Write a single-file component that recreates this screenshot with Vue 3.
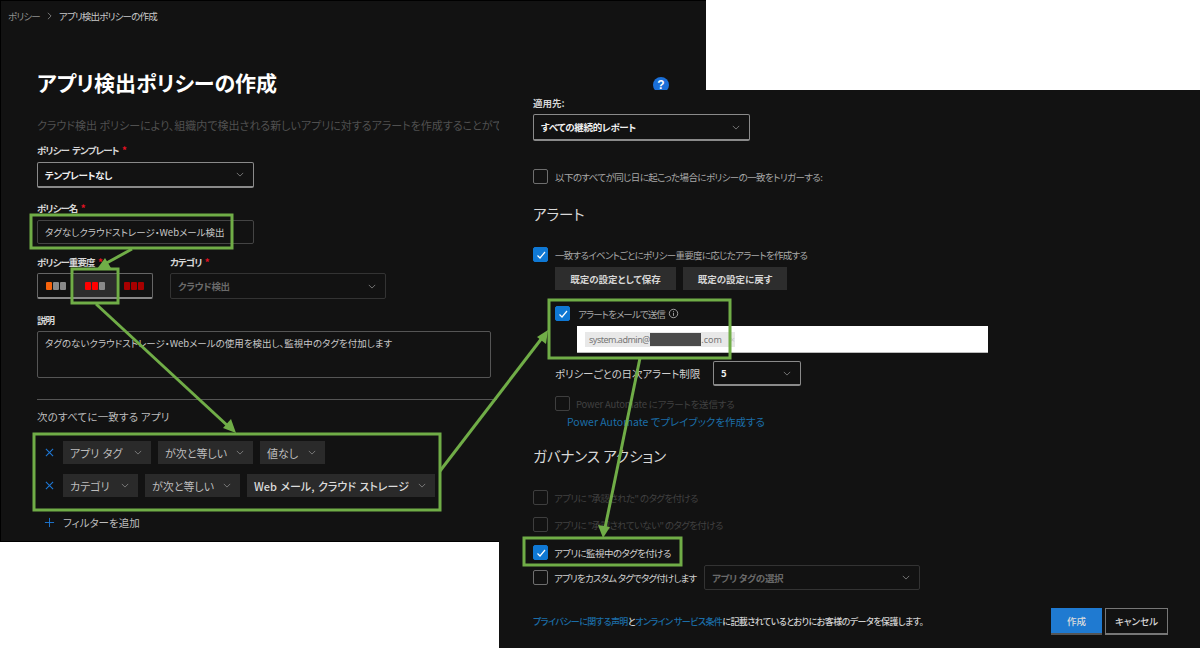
<template>
  <div class="page">
    <!-- left window -->
    <section class="win win-left">
      <div class="crumbs">
        <span>ポリシー</span>
        <svg class="crumb-sep" viewBox="0 0 6 10"><path d="M1 1l4 4-4 4" /></svg>
        <span class="crumb-now">アプリ検出ポリシーの作成</span>
      </div>
      <div class="title-row">
        <h1>アプリ検出ポリシーの作成</h1>
        <span class="help">?</span>
      </div>
      <p class="intro">クラウド検出 ポリシーにより、組織内で検出される新しいアプリに対するアラートを作成することができます。</p>

      <label class="lbl lbl-template">ポリシー テンプレート <i>*</i></label>
      <div class="select strong sel-template">
        <span>テンプレートなし</span>
        <svg class="chev" viewBox="0 0 10 6"><path d="M1 1l4 4 4-4" /></svg>
      </div>

      <label class="lbl lbl-name">ポリシー名 <i>*</i></label>
      <div class="input name-input">タグなしクラウドストレージ・Webメール検出</div>

      <div class="sev-row">
        <div>
          <label class="lbl">ポリシー重要度 <i>*</i></label>
          <div class="sev-group">
            <div v-for="(s, i) in severities" :key="i" class="sev" :class="{ active: i === 1 }">
              <span v-for="(c, j) in s" :key="j" class="bar" :class="c"></span>
            </div>
          </div>
        </div>
        <div class="cat-col">
          <label class="lbl">カテゴリ <i>*</i></label>
          <div class="select disabled sel-cat">
            <span>クラウド検出</span>
            <svg class="chev" viewBox="0 0 10 6"><path d="M1 1l4 4 4-4" /></svg>
          </div>
        </div>
      </div>

      <label class="lbl lbl-desc">説明</label>
      <div class="input textarea">タグのないクラウドストレージ・Webメールの使用を検出し、監視中のタグを付加します</div>

      <div class="divider"></div>
      <div class="match-title">次のすべてに一致する アプリ</div>

      <div v-for="(row, i) in filters" :key="i" class="filter-row">
        <svg class="x" viewBox="0 0 10 10"><path d="M1 1l8 8M9 1l-8 8" /></svg>
        <div v-for="chip in row" :key="chip.t" class="chip" :style="{ width: chip.w + 'px' }">
          <span :class="{ em: chip.em }">{{ chip.t }}</span>
          <svg class="chev" viewBox="0 0 10 6"><path d="M1 1l4 4 4-4" /></svg>
        </div>
      </div>

      <div class="add-filter">
        <svg class="plus" viewBox="0 0 12 12"><path d="M6 1v10M1 6h10" /></svg>
        <span>フィルターを追加</span>
      </div>
    </section>

    <!-- right window -->
    <section class="win win-right">
      <label class="lbl lbl-apply">適用先:</label>
      <div class="select strong sel-apply">
        <span>すべての継続的レポート</span>
        <svg class="chev" viewBox="0 0 10 6"><path d="M1 1l4 4 4-4" /></svg>
      </div>

      <div class="check trigger">
        <span class="cb"></span>
        <span class="txt">以下のすべてが同じ日に起こった場合にポリシーの一致をトリガーする:</span>
      </div>

      <h2 class="h-alert">アラート</h2>

      <div class="check alert-check">
        <span class="cb on"><svg viewBox="0 0 12 12"><path d="M2.5 6.5l2.5 2.5 5-6" /></svg></span>
        <span class="txt">一致するイベントごとにポリシー重要度に応じたアラートを作成する</span>
      </div>
      <div class="btn-row">
        <button class="btn btn-save">既定の設定として保存</button>
        <button class="btn btn-reset">既定の設定に戻す</button>
      </div>

      <div class="check mail-check">
        <span class="cb on"><svg viewBox="0 0 12 12"><path d="M2.5 6.5l2.5 2.5 5-6" /></svg></span>
        <span class="txt">アラートをメールで送信</span>
        <svg class="info" viewBox="0 0 12 12"><circle cx="6" cy="6" r="4.6" /><path d="M6 5.2v3.4M6 3.2v1" /></svg>
      </div>
      <div class="mail-box">
        <div class="mail-chip">
          <span class="addr">system.admin@</span><span class="redact"></span><span>.com</span><span class="mail-x">×</span>
        </div>
      </div>

      <div class="limit-row">
        <span class="limit-label">ポリシーごとの日次アラート制限</span>
        <div class="select strong sel-limit">
          <span>5</span>
          <svg class="chev" viewBox="0 0 10 6"><path d="M1 1l4 4 4-4" /></svg>
        </div>
      </div>

      <div class="check pa-check muted">
        <span class="cb"></span>
        <span class="txt">Power Automate にアラートを送信する</span>
      </div>
      <a class="link pa-link">Power Automate でプレイブックを作成する</a>

      <h2 class="h-gov">ガバナンス アクション</h2>

      <div class="check gov1 muted">
        <span class="cb"></span>
        <span class="txt">アプリに "承認された" のタグを付ける</span>
      </div>
      <div class="check gov2 muted">
        <span class="cb"></span>
        <span class="txt">アプリに "承認されていない" のタグを付ける</span>
      </div>
      <div class="check gov3">
        <span class="cb on"><svg viewBox="0 0 12 12"><path d="M2.5 6.5l2.5 2.5 5-6" /></svg></span>
        <span class="txt bright">アプリに監視中のタグを付ける</span>
      </div>
      <div class="custom-row">
        <span class="cb"></span>
        <span class="txt bright">アプリをカスタム タグでタグ付けします</span>
        <div class="select disabled sel-tag">
          <span>アプリ タグの選択</span>
          <svg class="chev" viewBox="0 0 10 6"><path d="M1 1l4 4 4-4" /></svg>
        </div>
      </div>

      <div class="footer">
        <p class="legal">
          <a class="link">プライバシーに関する声明</a>と<a class="link">オンライン サービス条件</a>に記載されているとおりにお客様のデータを保護します。
        </p>
        <div class="actions">
          <button class="act primary">作成</button>
          <button class="act ghost">キャンセル</button>
        </div>
      </div>
    </section>

    <!-- callouts drawn over the screenshots -->
    <svg class="marks" viewBox="0 0 1200 648">
      <g fill="none" stroke="#70ad47" stroke-width="3">
        <rect x="31" y="215" width="201" height="33" />
        <rect x="72" y="269" width="46" height="34" />
        <rect x="34" y="434" width="406" height="76" />
        <rect x="549" y="300" width="181" height="58" />
        <rect x="524" y="538" width="157" height="27" />
        <path d="M132 249L103 265" />
        <path d="M96 304L229 427" />
        <path d="M440 471L542 338" />
        <path d="M640 358L605 528" />
      </g>
      <g fill="#70ad47">
        <path d="M97 269L105 258L111 268Z" />
        <path d="M236 433L223 428L231 419Z" />
        <path d="M548 330L546 344L537 337Z" />
        <path d="M603 538L598 525L610 527Z" />
      </g>
    </svg>
  </div>
</template>

<script setup>
const severities = [
  ['orange', 'gray', 'gray'],
  ['red', 'red', 'gray'],
  ['dark', 'dark', 'dark']
]

const filters = [
  [
    { t: 'アプリ タグ', w: 88 },
    { t: 'が次と等しい', w: 95 },
    { t: '値なし', w: 65 }
  ],
  [
    { t: 'カテゴリ', w: 75 },
    { t: 'が次と等しい', w: 95 },
    { t: 'Web メール, クラウド ストレージ', w: 188, em: true }
  ]
]
</script>

<style>
html,
body {
  margin: 0;
  background: #fff;
}
</style>

<style scoped>
.page {
  position: relative;
  width: 1200px;
  height: 648px;
  overflow: hidden;
  background: #fff;
  font-family: "Noto Sans CJK JP", "Noto Sans", sans-serif;
  font-feature-settings: "palt";
  font-size: 10px;
  color: #c8c8c8;
}

.win {
  position: absolute;
  box-sizing: border-box;
  background: #121212;
}

.win-left {
  left: 0;
  top: 0;
  width: 706px;
  height: 542px;
  padding-left: 36px;
  border: 1px solid #000;
  border-width: 1px 0 1px 1px;
}

.win-right {
  left: 499px;
  top: 90px;
  width: 701px;
  height: 558px;
  padding: 6px 32px 0 34px;
}

.crumbs {
  display: flex;
  align-items: center;
  height: 29px;
  margin-left: -29px;
  color: #8f8f8f;
  font-size: 9.5px;
  letter-spacing: -0.8px;
}

.crumb-sep {
  width: 5px;
  height: 8px;
  margin: 0 7px 0 7px;
}

.crumb-sep path {
  fill: none;
  stroke: #8f8f8f;
}

.crumb-now {
  color: #c9c9c9;
}

.title-row {
  display: flex;
  justify-content: space-between;
  margin-top: 36px;
  padding-right: 37px;
  height: 32px;
}

h1 {
  margin: 0;
  color: #fff;
  font-size: 21px;
  line-height: 32px;
  font-weight: 700;
}

.help {
  width: 16px;
  height: 16px;
  margin-top: 11px;
  border-radius: 50%;
  background: #1a6fd8;
  color: #fff;
  font: 700 12px/16px "Liberation Sans", sans-serif;
  text-align: center;
}

.intro {
  margin: 19px 0 0;
  width: 640px;
  height: 16px;
  color: #505050;
  font-size: 11px;
  line-height: 16px;
  white-space: nowrap;
}

.lbl {
  display: block;
  height: 14px;
  color: #d6d6d6;
  font-size: 9.5px;
  line-height: 14px;
  font-weight: 700;
  letter-spacing: -0.9px;
  word-spacing: 2px;
}

.lbl i {
  color: #e81123;
  font-style: normal;
}

.lbl-template {
  margin-top: 10px;
}

.lbl-name {
  margin-top: 13px;
}

.lbl-desc {
  margin-top: 14px;
}

.select,
.input {
  box-sizing: border-box;
  display: flex;
  align-items: center;
  justify-content: space-between;
  padding: 0 7px;
  border: 1px solid #444;
  border-radius: 2px;
  font-size: 9.5px;
}

.select.strong {
  border: 1px solid #8a8a8a;
  border-bottom-width: 2px;
  color: #f0f0f0;
  font-weight: 700;
  letter-spacing: -0.3px;
}

.select.disabled {
  border-color: #333;
  color: #6a6a6a;
  font-weight: 700;
  letter-spacing: -0.3px;
}

.chev {
  width: 8px;
  height: 5px;
  flex: none;
  margin-right: 2px;
}

.chev path {
  fill: none;
  stroke: #8a8a8a;
  stroke-width: 1;
}

.sel-template {
  width: 217px;
  height: 26px;
  margin-top: 5px;
}

.name-input {
  width: 217px;
  height: 24px;
  margin-top: 5px;
  color: #c8c8c8;
  white-space: nowrap;
}

.sev-row {
  display: flex;
  margin-top: 11px;
}

.sev-group {
  box-sizing: border-box;
  display: flex;
  width: 116px;
  height: 26px;
  margin-top: 4px;
  border: 1px solid #666;
  border-bottom: 2px solid #8a8a8a;
  border-radius: 2px;
}

.sev {
  display: flex;
  flex: none;
  align-items: center;
  justify-content: center;
  gap: 1px;
  width: 36px;
}

.sev.active {
  width: 42px;
  background: #2d2d2d;
}

.bar {
  width: 6px;
  height: 8px;
  border-radius: 1px;
}

.bar.orange {
  background: #f7630c;
}

.bar.gray {
  background: #8a8a8a;
}

.bar.red {
  background: #f00;
}

.bar.dark {
  background: #a80000;
}

.cat-col {
  margin-left: 17px;
}

.sel-cat {
  width: 216px;
  height: 26px;
  margin-top: 4px;
}

.textarea {
  align-items: flex-start;
  width: 454px;
  height: 47px;
  margin-top: 4px;
  padding-top: 4px;
  border-color: #555;
  color: #c8c8c8;
}

.divider {
  width: 460px;
  height: 1px;
  margin-top: 21px;
  background: #555;
}

.match-title {
  height: 16px;
  margin-top: 9px;
  color: #bdbdbd;
  font-size: 10.5px;
  line-height: 16px;
  letter-spacing: 0.2px;
}

.filter-row {
  display: flex;
  align-items: center;
  gap: 7px;
  height: 23px;
  margin-top: 10px;
}

.match-title + .filter-row {
  margin-top: 16px;
}

.x {
  width: 9px;
  height: 9px;
  margin: 0 2px 0 8px;
  flex: none;
}

.x path {
  fill: none;
  stroke: #1e78d6;
  stroke-width: 1.2;
}

.chip {
  box-sizing: border-box;
  display: flex;
  align-items: center;
  justify-content: space-between;
  height: 23px;
  padding: 0 7px;
  background: #2a2a2a;
  color: #bdbdbd;
  font-size: 11px;
  word-spacing: 1px;
  white-space: nowrap;
}

.chip .em {
  color: #dcdcdc;
  font-weight: 500;
}

.add-filter {
  display: flex;
  align-items: center;
  gap: 8px;
  height: 16px;
  margin-top: 17px;
  margin-left: 7px;
  color: #bdbdbd;
  font-size: 10.5px;
}

.plus {
  width: 11px;
  height: 11px;
}

.plus path {
  fill: none;
  stroke: #1e78d6;
  stroke-width: 1;
}

/* right window */
.lbl-apply {
  letter-spacing: 0;
}

.sel-apply {
  width: 217px;
  height: 27px;
  margin-top: 4px;
}

.check,
.custom-row {
  display: flex;
  align-items: center;
  height: 15px;
}

.cb {
  box-sizing: border-box;
  display: flex;
  flex: none;
  align-items: center;
  justify-content: center;
  width: 15px;
  height: 15px;
  border: 1px solid #6e6e6e;
  border-radius: 2px;
}

.cb.on {
  border-color: #0f78d4;
  background: #0f78d4;
}

.cb svg {
  width: 12px;
  height: 12px;
}

.cb path {
  fill: none;
  stroke: #fff;
  stroke-width: 1.2;
}

.txt {
  margin-left: 6px;
  color: #a8a8a8;
  font-size: 9.5px;
  letter-spacing: -0.6px;
  white-space: nowrap;
}

.txt.bright {
  color: #d0d0d0;
}

.muted .cb {
  border-color: #3e3e3e;
}

.muted .txt {
  color: #414141;
}

.trigger {
  margin-top: 28px;
}

.trigger .txt,
.alert-check .txt {
  margin-left: 7px;
}

.alert-check .txt {
  letter-spacing: -0.7px;
}

h2 {
  height: 20px;
  margin: 0;
  color: #d8d8d8;
  font-size: 14.5px;
  line-height: 20px;
  font-weight: 400;
}

.h-alert {
  margin-top: 20px;
}

.alert-check {
  margin-top: 23px;
}

.btn-row {
  display: flex;
  gap: 7px;
  margin: 5px 0 0 22px;
}

.btn {
  height: 23px;
  padding: 0;
  border: 0;
  background: #2d2d2d;
  color: #d6d6d6;
  font: inherit;
  font-size: 9.5px;
  font-weight: 700;
}

.btn-save {
  width: 121px;
}

.btn-reset {
  width: 104px;
}

.mail-check {
  margin: 16px 0 0 22px;
}

.mail-check .txt {
  margin-left: 8px;
  letter-spacing: -0.9px;
}

.info {
  width: 11px;
  height: 11px;
  margin-left: 3px;
}

.info circle,
.info path {
  fill: none;
  stroke: #a8a8a8;
  stroke-width: 1;
}

.mail-box {
  box-sizing: border-box;
  display: flex;
  align-items: center;
  width: 411px;
  height: 27px;
  margin: 5px 0 0 44px;
  padding-left: 8px;
  border-bottom: 1px solid #bbb;
  background: #fff;
}

.mail-chip {
  display: flex;
  align-items: center;
  width: 150px;
  height: 15px;
  padding-left: 4px;
  box-sizing: border-box;
  background: #e8e8e8;
  color: #777;
  font-family: "Noto Sans", sans-serif;
  font-size: 9px;
}

.addr {
  letter-spacing: -0.5px;
}

.redact {
  width: 53px;
  height: 13px;
  background: #4a4a4a;
}

.mail-x {
  margin-left: 8px;
  color: #c8c8c8;
}

.limit-row {
  display: flex;
  align-items: center;
  height: 25px;
  margin: 8px 0 0 22px;
}

.limit-label {
  width: 158px;
  color: #d0d0d0;
  font-size: 10.5px;
  letter-spacing: -0.1px;
  white-space: nowrap;
}

.sel-limit {
  width: 88px;
  height: 25px;
}

.pa-check {
  margin: 10px 0 0 22px;
}

.pa-check .txt {
  letter-spacing: -0.2px;
}

.link {
  color: #1b6ea8;
}

.pa-link {
  display: block;
  height: 14px;
  margin: 4px 0 0 34px;
  font-size: 10.5px;
  line-height: 14px;
}

.h-gov {
  margin-top: 17px;
}

.gov1 {
  margin-top: 24px;
}

.gov2 {
  margin-top: 12px;
}

.gov3 {
  margin-top: 13px;
}

.custom-row {
  height: 25px;
  margin-top: 5px;
}

.custom-row .txt {
  width: 150px;
  letter-spacing: -0.8px;
}

.sel-tag {
  width: 216px;
  height: 25px;
}

.footer {
  display: flex;
  align-items: center;
  justify-content: space-between;
  height: 27px;
  margin-top: 18px;
}

.legal {
  margin: 0;
  color: #d0d0d0;
  font-size: 9px;
  font-weight: 500;
  letter-spacing: -0.55px;
}

.actions {
  display: flex;
  gap: 3px;
}

.act {
  box-sizing: border-box;
  height: 27px;
  padding: 0;
  font: inherit;
  font-size: 9.5px;
  font-weight: 500;
}

.primary {
  width: 51px;
  border: 0;
  border-bottom: 2px solid #555;
  background: #1f7ad1;
  color: #dcdcdc;
}

.ghost {
  width: 63px;
  border: 1px solid #777;
  border-bottom-width: 2px;
  background: #121212;
  color: #d6d6d6;
}

.marks {
  position: absolute;
  left: 0;
  top: 0;
  width: 1200px;
  height: 648px;
  pointer-events: none;
}
</style>
